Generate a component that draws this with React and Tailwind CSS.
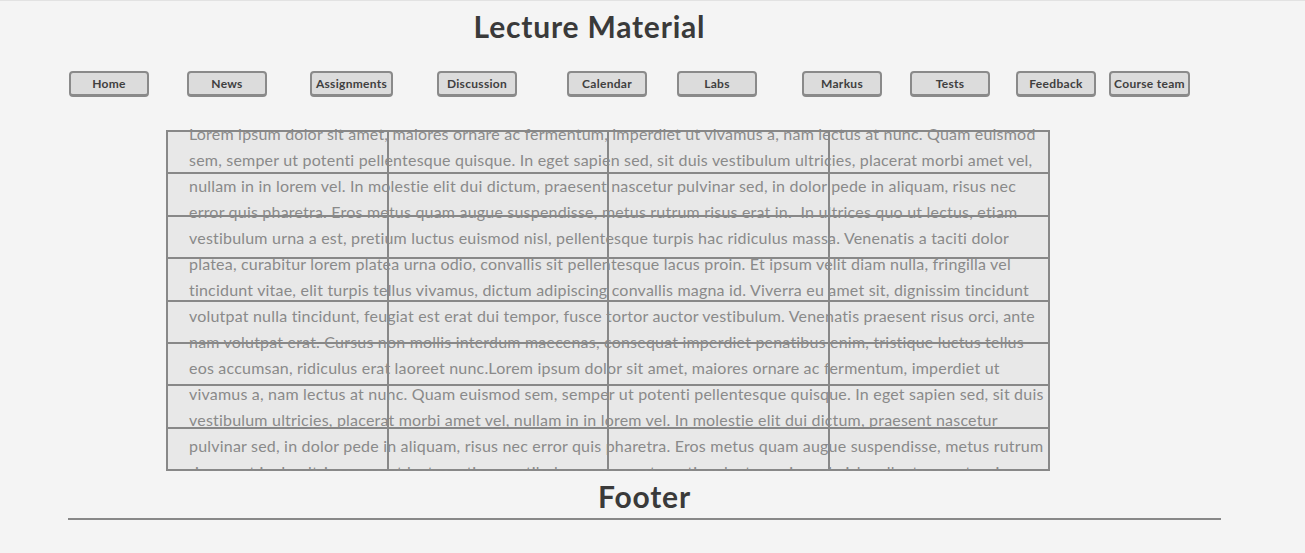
import React from 'react';

const navItems = [
    { label: 'Home', cls: 'ml-0 w-[80px]' },
    { label: 'News', cls: 'ml-[38px] w-[80px]' },
    { label: 'Assignments', cls: 'ml-[43px] w-[83px]' },
    { label: 'Discussion', cls: 'ml-[44px] w-[80px]' },
    { label: 'Calendar', cls: 'ml-[50px] w-[80px]' },
    { label: 'Labs', cls: 'ml-[30px] w-[80px]' },
    { label: 'Markus', cls: 'ml-[45px] w-[80px]' },
    { label: 'Tests', cls: 'ml-[28px] w-[80px]' },
    { label: 'Feedback', cls: 'ml-[26px] w-[80px]' },
    { label: 'Course team', cls: 'ml-[13px] w-[81px]' },
];

const lines = [
    'Lorem ipsum dolor sit amet, maiores ornare ac fermentum, imperdiet ut vivamus a, nam lectus at nunc. Quam euismod',
    'sem, semper ut potenti pellentesque quisque. In eget sapien sed, sit duis vestibulum ultricies, placerat morbi amet vel,',
    'nullam in in lorem vel. In molestie elit dui dictum, praesent nascetur pulvinar sed, in dolor pede in aliquam, risus nec',
    'error quis pharetra. Eros metus quam augue suspendisse, metus rutrum risus erat in.  In ultrices quo ut lectus, etiam',
    'vestibulum urna a est, pretium luctus euismod nisl, pellentesque turpis hac ridiculus massa. Venenatis a taciti dolor',
    'platea, curabitur lorem platea urna odio, convallis sit pellentesque lacus proin. Et ipsum velit diam nulla, fringilla vel',
    'tincidunt vitae, elit turpis tellus vivamus, dictum adipiscing convallis magna id. Viverra eu amet sit, dignissim tincidunt',
    'volutpat nulla tincidunt, feugiat est erat dui tempor, fusce tortor auctor vestibulum. Venenatis praesent risus orci, ante',
    'nam volutpat erat. Cursus non mollis interdum maecenas, consequat imperdiet penatibus enim, tristique luctus tellus',
    'eos accumsan, ridiculus erat laoreet nunc.Lorem ipsum dolor sit amet, maiores ornare ac fermentum, imperdiet ut',
    'vivamus a, nam lectus at nunc. Quam euismod sem, semper ut potenti pellentesque quisque. In eget sapien sed, sit duis',
    'vestibulum ultricies, placerat morbi amet vel, nullam in in lorem vel. In molestie elit dui dictum, praesent nascetur',
    'pulvinar sed, in dolor pede in aliquam, risus nec error quis pharetra. Eros metus quam augue suspendisse, metus rutrum',
    'risus erat in. In ultrices quo ut lectus, etiam vestibulum urna a est, pretium luctus euismod nisl, pellentesque turpis',
];

const cells = Array.from({ length: 32 }, (_, i) => i);

const App = () => {
    return (
        <div className="min-h-[553px] w-full bg-[#f4f4f4] border-t border-[#e2e2e2] font-['Lato','Liberation_Sans',sans-serif]">
            <div className="w-[1179px] pt-[7px] text-center">
                <h1 className="text-[30px] leading-[36px] font-bold tracking-[0.8px] text-[#3a3a3a]">Lecture Material</h1>
            </div>

            <nav className="mt-[27px] flex pl-[69px]">
                {navItems.map((item) => (
                    <button
                        key={item.label}
                        className={`${item.cls} h-[26px] rounded-[4px] border-2 border-b-[3px] border-[#8a8a8a] bg-[#dcdcdc] text-[12px] font-bold tracking-[0.3px] text-[#404040] whitespace-nowrap`}
                    >
                        {item.label}
                    </button>
                ))}
            </nav>

            <div className="relative ml-[166px] mt-[24px] h-[350px] w-[920px] overflow-hidden">
                <div className="mt-[9px] grid h-[341px] w-[884px] grid-cols-4 grid-rows-8 gap-[2px] border-2 border-[#888] bg-[#888]">
                    {cells.map((c) => (
                        <div key={c} className="bg-[#e8e8e8]" />
                    ))}
                </div>
                <div className="absolute left-[23px] top-0 text-[16px] leading-[26px] tracking-[0.2px] text-[#8a8a8a] whitespace-pre">
                    {lines.map((line, i) => (
                        <div key={i}>{line}</div>
                    ))}
                </div>
            </div>

            <div className="ml-[68px] mt-[7px] w-[1153px] border-b-2 border-[#888] pb-[4px] text-center">
                <h2 className="text-[30px] leading-[36px] font-bold tracking-[0.8px] text-[#3a3a3a]">Footer</h2>
            </div>
        </div>
    );
};

export default App;
